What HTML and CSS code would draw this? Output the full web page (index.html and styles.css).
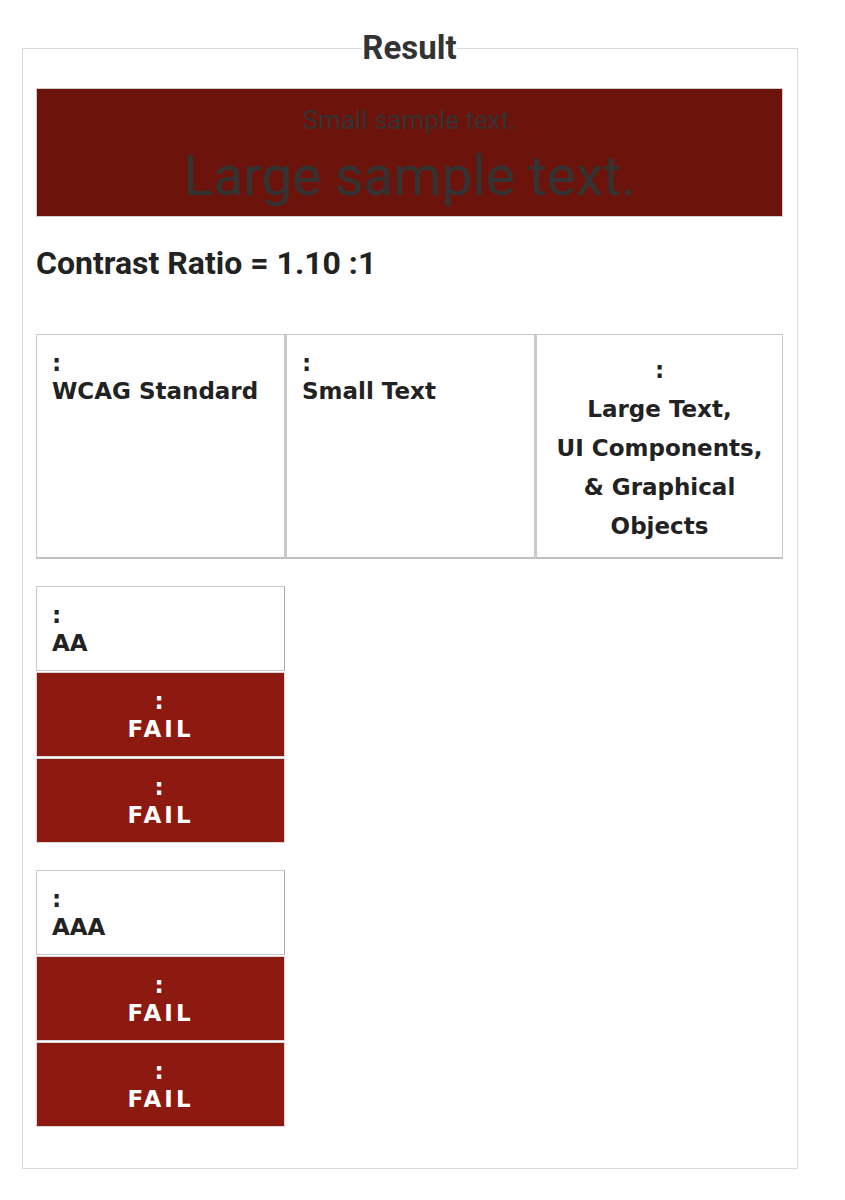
FILE: index.html
```html
<!DOCTYPE html>
<html lang="en">
<head>
<meta charset="utf-8">
<title>Result</title>
<link rel="stylesheet" href="styles.css">
</head>
<body>
<fieldset class="result">
  <legend class="result-title">Result</legend>
  <div class="sample">
    <p class="sample-small">Small sample text.</p>
    <p class="sample-large">Large sample text.</p>
  </div>
  <h2 class="ratio">Contrast Ratio = 1.10 :1</h2>

  <div class="head-row">
    <div class="cell head"><span class="lbl">:</span>WCAG Standard</div>
    <div class="cell head"><span class="lbl">:</span>Small Text</div>
    <div class="cell head wide"><span class="lbl">:</span>Large Text,<br>UI Components,<br>&amp; Graphical<br>Objects</div>
  </div>

  <div class="level">
    <div class="cell name"><span class="lbl">:</span>AA</div>
    <div class="cell fail"><span class="lbl">:</span>FAIL</div>
    <div class="cell fail"><span class="lbl">:</span>FAIL</div>
  </div>

  <div class="level">
    <div class="cell name"><span class="lbl">:</span>AAA</div>
    <div class="cell fail"><span class="lbl">:</span>FAIL</div>
    <div class="cell fail"><span class="lbl">:</span>FAIL</div>
  </div>
</fieldset>
</body>
</html>
```

FILE: styles.css
```css
html, body {
  margin: 0;
  padding: 0;
  background: #ffffff;
}

body {
  font-family: "DejaVu Sans", "Noto Sans", "Liberation Sans", sans-serif;
  color: #222;
}

.result {
  box-sizing: border-box;
  width: 776px;
  margin: 28px 0 0 22px;
  padding: 20px 14px 41px 13px;
  border: 1px solid #d9d9d9;
}

.result-title {
  margin: 0 auto;
  padding: 0;
  font-family: "Roboto", "Liberation Sans", sans-serif;
  font-weight: 700;
  font-size: 33px;
  line-height: 40px;
  color: #333;
}

.sample {
  box-sizing: border-box;
  height: 129px;
  background: #6c140c;
  border: 1px solid #cfcfcf;
  text-align: center;
  color: #333;
  font-family: "Roboto", "Liberation Sans", sans-serif;
  padding-top: 15px;
}

.sample p {
  margin: 0;
}

.sample-small {
  font-size: 26px;
  line-height: 32px;
}

.sample-large {
  font-size: 55px;
  line-height: 64px;
  margin-top: 8px !important;
}

.ratio {
  margin: 28px 0 53px;
  font-family: "Roboto", "Liberation Sans", sans-serif;
  font-weight: 700;
  font-size: 32px;
  line-height: 36px;
  color: #222;
}

.head-row {
  display: grid;
  grid-template-columns: 249px 250px 248px;
}

.cell {
  box-sizing: border-box;
  border: 1px solid #c9c9c9;
  font-weight: 700;
  font-size: 23px;
  line-height: 28px;
  padding: 14px 15px;
}

.lbl {
  display: block;
}

.head {
  height: 225px;
}

.head + .head {
  border-left: 2px solid #c9c9c9;
}

.head.wide {
  text-align: center;
  line-height: 39px;
  padding-top: 16px;
}

.head-row .cell {
  border-bottom: 2px solid #c0c0c0;
}

.level {
  width: 249px;
  margin-top: 27px;
  display: flex;
  flex-direction: column;
  gap: 1px;
}

.name {
  height: 85px;
  background: #fff;
  border-right-color: #a9a9a9;
}

.fail {
  height: 85px;
  background: #8d1a11;
  color: #fff;
  text-align: center;
  letter-spacing: 3px;
  border-color: #d8d8d8;
}
```
